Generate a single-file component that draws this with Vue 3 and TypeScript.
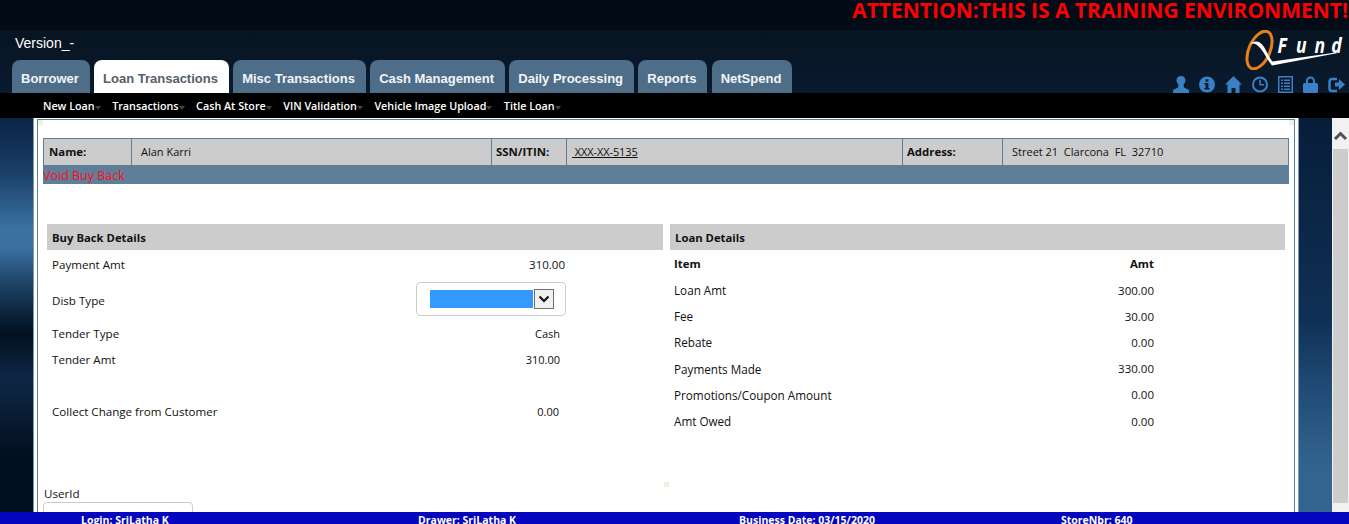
<script setup lang="ts">
const tabs = ['Borrower', 'Loan Transactions', 'Misc Transactions', 'Cash Management', 'Daily Processing', 'Reports', 'NetSpend']
const menu = ['New Loan', 'Transactions', 'Cash At Store', 'VIN Validation', 'Vehicle Image Upload', 'Title Loan']
const buyBack = [
  { label: 'Payment Amt', value: '310.00', cls: 'r1' },
  { label: 'Disb Type', value: '', cls: 'r2' },
  { label: 'Tender Type', value: 'Cash', cls: 'r3' },
  { label: 'Tender Amt', value: '310.00', cls: 'r4' },
  { label: 'Collect Change from Customer', value: '0.00', cls: 'r5' },
]
const loan = [
  ['Loan Amt', '300.00'],
  ['Fee', '30.00'],
  ['Rebate', '0.00'],
  ['Payments Made', '330.00'],
  ['Promotions/Coupon Amount', '0.00'],
  ['Amt Owed', '0.00'],
]
</script>

<template>
  <div class="app">
    <header class="header">
      <div class="attention">ATTENTION:THIS IS A TRAINING ENVIRONMENT!</div>
      <div class="version">Version_-</div>
      <div class="tab-row">
        <div class="tabs">
          <div v-for="t in tabs" :key="t" class="tab" :class="{ active: t === 'Loan Transactions' }">{{ t }}</div>
        </div>
        <div class="brand">
          <svg class="logo" width="100" height="40" viewBox="0 0 100 40">
            <ellipse cx="15.500" cy="20" rx="10.500" ry="20" transform="rotate(24 15.500 20)" fill="none" stroke="#e8801a" stroke-width="3" />
            <path d="M6 14 C11 10 16 11 20 17 C23 22 26 29 28.500 31.500 L92 22.500 L94 23 L28 35.500 C24 31 21 24 17 19 C13.500 14.500 10 12.500 6 14 Z" fill="#fff" />
            <text y="23" class="logo-text" transform="scale(.8 1)" x="42 65 88 109">Fund</text>
          </svg>
          <div class="icons">
            <svg width="16" height="17" viewBox="0 0 16 17"><circle cx="8" cy="4.500" r="4.500" /><path d="M5.500 8h5l.5 3.500 5 2.500v3H0v-3l5-2.500z" /></svg>
            <svg width="16" height="17" viewBox="0 0 16 17"><circle cx="8" cy="8.500" r="8" /><rect x="6.600" y="3.300" width="2.800" height="2.400" fill="#0a1a2e" /><path d="M5.400 7h4v5h1.200v1.500H5.400V12h1.200V8.400H5.400z" fill="#0a1a2e" /></svg>
            <svg width="17" height="17" viewBox="0 0 17 17"><path d="M8.500 0 17 8.500h-2.500V17H10.500v-5h-4v5H2.500V8.500H0z" /></svg>
            <svg width="16" height="17" viewBox="0 0 16 17"><circle cx="8" cy="8.500" r="7" fill="none" stroke="#3a80c4" stroke-width="2" /><path d="M7.200 4h1.600v4h3.200v1.600H7.200z" /></svg>
            <svg width="15" height="17" viewBox="0 0 15 17"><path fill-rule="evenodd" d="M0 0h15v17H0zM1.500 1.500v14h12v-14z" /><path d="M3 3.500h2v1.500H3zM6 3.500h6v1.500H6zM3 6.500h2v1.500H3zM6 6.500h6v1.500H6zM3 9.500h2v1.500H3zM6 9.500h6v1.500H6zM3 12.500h2v1.500H3zM6 12.500h6v1.500H6z" /></svg>
            <svg width="15" height="17" viewBox="0 0 15 17"><path d="M3 7V5a4.500 4.500 0 0 1 9 0v2h-2V5a2.500 2.500 0 0 0-5 0v2z" /><rect y="7" width="15" height="10" rx="1.500" /></svg>
            <svg width="17" height="17" viewBox="0 0 17 17"><path d="M9 3H4a2.500 2.500 0 0 0-2.500 2.500v7A2.500 2.500 0 0 0 4 15h5" fill="none" stroke="#3a80c4" stroke-width="2.500" /><path d="M7 6.500h4V3l6 5.500-6 5.500v-3.500H7z" /></svg>
          </div>
        </div>
      </div>
    </header>

    <nav class="menu">
      <div v-for="m in menu" :key="m" class="menu-item">{{ m }}<i class="caret"></i></div>
    </nav>

    <div class="body-row">
      <div class="side left"></div>
      <main class="page">
        <div class="frame">
          <i class="speck s-left"></i>
          <i class="speck s-right"></i>
          <i class="speck s-mid"></i>
          <div class="info">
            <div class="info-row">
              <div class="cell c-name"><b>Name:</b></div>
              <div class="cell c-name-v">Alan Karri</div>
              <div class="cell c-ssn"><b>SSN/ITIN:</b></div>
              <div class="cell c-ssn-v"><u>&nbsp;XXX-XX-5135</u></div>
              <div class="cell c-addr"><b>Address:</b></div>
              <div class="cell c-addr-v">Street 21 &nbsp;Clarcona &nbsp;FL &nbsp;32710</div>
            </div>
            <div class="title-bar">Void Buy Back</div>
          </div>

          <div class="panels">
            <section class="panel p-left">
              <h3 class="panel-head">Buy Back Details</h3>
              <div v-for="row in buyBack" :key="row.label" class="bb-row" :class="row.cls">
                <span>{{ row.label }}</span>
                <div v-if="row.label === 'Disb Type'" class="select-box">
                  <div class="select-fill"></div>
                  <div class="select-btn">
                    <svg width="12" height="8" viewBox="0 0 12 8"><path d="M1.500 1.500 6 6l4.500-4.500" fill="none" stroke="#111" stroke-width="2.200" /></svg>
                  </div>
                </div>
                <span v-else class="val">{{ row.value }}</span>
              </div>
            </section>
            <section class="panel p-right">
              <h3 class="panel-head">Loan Details</h3>
              <div class="ld-row first"><b>Item</b><b>Amt</b></div>
              <div v-for="row in loan" :key="row[0]" class="ld-row">
                <span>{{ row[0] }}</span><span>{{ row[1] }}</span>
              </div>
            </section>
          </div>

          <div class="user">
            <div>UserId</div>
            <div class="user-input"></div>
          </div>
        </div>
      </main>
      <div class="side right"></div>
      <div class="scrollbar">
        <svg width="17" height="17" viewBox="0 0 17 17"><path d="M3 13 8.500 7.500 14 13" fill="none" stroke="#505050" stroke-width="3" /></svg>
        <div class="thumb"></div>
      </div>
    </div>

    <footer class="footer">
      <span class="f1">Login: SriLatha K</span>
      <span class="f2">Drawer: SriLatha K</span>
      <span class="f3">Business Date: 03/15/2020</span>
      <span class="f4">StoreNbr: 640</span>
    </footer>
  </div>
</template>

<style>
html, body {
  margin: 0;
  overflow: hidden;
}
</style>

<style scoped>
.app {
  position: relative;
  width: 1349px;
  height: 524px;
  overflow: hidden;
  display: flex;
  flex-direction: column;
  font-family: 'Open Sans', sans-serif;
  color: #111;
  background: #07182a;
}

.header {
  height: 93px;
  flex-shrink: 0;
  background: linear-gradient(#020b16 0, #020b16 30px, #071421 30px, #0a1b2f 100%);
  position: relative;
}
.attention {
  height: 20px;
  line-height: 20px;
  text-align: right;
  padding-right: 1px;
  font-weight: 700;
  font-size: 21px;
  color: #f00;
  white-space: nowrap;
}
.version {
  margin-top: 15px;
  padding-left: 15px;
  height: 16px;
  line-height: 16px;
  font-family: 'Liberation Sans', sans-serif;
  font-size: 14px;
  color: #fff;
}
.tab-row {
  position: absolute;
  left: 0;
  right: 0;
  bottom: 0;
  display: flex;
  justify-content: space-between;
  align-items: flex-end;
}
.tabs {
  display: flex;
  gap: 4.500px;
  padding-left: 12px;
}
.tab {
  height: 33px;
  line-height: 37px;
  padding: 0 10.750px 0 9px;
  background: #4e6d88;
  border-radius: 8px 8px 0 0;
  color: #f2f5f8;
  font-family: 'Liberation Sans', sans-serif;
  font-weight: 700;
  font-size: 13px;
  white-space: nowrap;
}
.tab.active {
  background: #fff;
  color: #55606a;
}
.brand {
  display: flex;
  flex-direction: column;
  align-items: flex-end;
}
.logo {
  margin-right: 5px;
  margin-bottom: 6px;
}
.logo-text {
  font-size: 22px;
  font-weight: 700;
  font-style: italic;
  fill: #fff;
}
.icons {
  display: flex;
  gap: 10px;
  padding-right: 4px;
  fill: #3a80c4;
}

.menu {
  height: 25px;
  flex-shrink: 0;
  background: #000;
  display: flex;
  gap: 17.500px;
  padding-left: 43px;
  align-items: center;
}
.menu-item {
  color: #fff;
  font-size: 10.750px;
  font-weight: 600;
  white-space: nowrap;
  position: relative;
}
.caret {
  position: absolute;
  right: -6px;
  top: 7px;
  border: 3px solid transparent;
  border-top: 4px solid #444;
}

.body-row {
  flex: 1;
  min-height: 0;
  display: flex;
}
.side {
  width: 33px;
  flex-shrink: 0;
}
.side.left {
  background: linear-gradient(#0a2545 0, #1a3f66 55px, #3a72a2 110px, #3a70a0 130px, #1d4468 165px, #021020 215px, #0f2745 260px, #020f1e 340px, #020f1e 100%);
}
.side.right {
  background: linear-gradient(#071d3a 0, #0f3055 200px, #1f4a75 267px, #336490 350px, #336490 100%);
}
.page {
  width: 1266px;
  flex-shrink: 0;
  background: #fff;
  padding: 1px 3px 0 3px;
  box-sizing: border-box;
  border-left: 1px solid #7d9ab2;
  border-right: 1px solid #7d9ab2;
}
.frame {
  position: relative;
  height: 100%;
  box-sizing: border-box;
  border: 1px solid #5f7f99;
  border-bottom: 0;
  padding: 18px 5px 0 5px;
  overflow: hidden;
}
.speck {
  position: absolute;
  width: 5px;
  height: 5px;
  background: #eef3e0;
}
.s-left { left: 0; top: 0; }
.s-right { right: 0; top: 0; }
.s-mid { left: 626px; top: 362px; }
.info {
  height: 46px;
}
.info-row {
  display: flex;
  height: 27px;
  box-sizing: border-box;
  background: #ccc;
  border: 1px solid #5f7f99;
  border-bottom: 0;
}
.cell {
  font-size: 11px;
  line-height: 26px;
  white-space: nowrap;
  box-sizing: border-box;
  padding-left: 5px;
  border-right: 1px solid #5f7f99;
}
.cell b {
  font-size: 11.400px;
}
.c-name { width: 88px; }
.c-name-v { width: 360px; padding-left: 9px; }
.c-ssn { width: 75px; padding-left: 4px; }
.c-ssn-v { width: 336px; padding-left: 5px; letter-spacing: -0.1px; }
.c-addr { width: 100px; padding-left: 4px; }
.c-addr-v { flex: 1; border-right: 0; padding-left: 9px; }
.title-bar {
  height: 19px;
  line-height: 22px;
  background: #5f7f99;
  color: #ff0a1e;
  font-size: 12.500px;
  overflow: hidden;
}
.panels {
  display: flex;
  gap: 7px;
  margin-top: 40px;
  padding: 0 4px;
  height: 252px;
}
.panel {
  flex-shrink: 0;
}
.p-left {
  width: 616px;
}
.p-right {
  width: 615px;
}
.panel-head {
  margin: 0;
  height: 26px;
  line-height: 27px;
  background: #ccc;
  padding-left: 5px;
  font-size: 11.300px;
  font-weight: 700;
}
.bb-row {
  display: flex;
  justify-content: space-between;
  align-items: center;
  padding-left: 5px;
  font-size: 11.600px;
  box-sizing: border-box;
}
.val {
  font-size: 11px;
}
.r1 { height: 30px; padding-right: 98px; padding-bottom: 2px; }
.r1 .val { font-size: 11.500px; }
.r2 { height: 38px; padding-right: 97px; }
.r2 > span { padding-top: 2px; }
.r3 { height: 30px; padding-right: 103px; }
.r4 { height: 22px; padding-right: 103px; }
.r5 { height: 82px; padding-right: 104px; }
.select-box {
  width: 150px;
  height: 34px;
  box-sizing: border-box;
  border: 1px solid #ccc;
  border-radius: 4px;
  display: flex;
  align-items: center;
  padding-left: 13px;
}
.select-fill {
  width: 103px;
  height: 18px;
  background: #3399ff;
}
.select-btn {
  width: 20px;
  height: 20px;
  margin-left: 1px;
  box-sizing: border-box;
  border: 1px solid #707070;
  background: #f0f0f0;
  display: flex;
  align-items: center;
  justify-content: center;
}
.ld-row {
  display: flex;
  justify-content: space-between;
  align-items: center;
  height: 26.200px;
  padding: 0 131px 0 4px;
  font-size: 11.700px;
}
.ld-row span:last-child {
  font-size: 11.500px;
}
.ld-row b {
  font-size: 11.400px;
}
.ld-row.first {
  height: 27px;
}
.user {
  margin-top: 10px;
  padding-left: 1px;
  font-size: 11.600px;
}
.user-input {
  margin-left: -1px;
  margin-top: 1px;
  width: 150px;
  height: 34px;
  box-sizing: border-box;
  border: 1px solid #ccc;
  border-radius: 4px;
}
.scrollbar {
  width: 17px;
  flex-shrink: 0;
  background: #f1f1f1;
  box-sizing: border-box;
  padding: 8px 1px 0 0;
  display: flex;
  flex-direction: column;
  align-items: center;
}
.scrollbar svg {
  flex-shrink: 0;
}
.thumb {
  width: 15px;
  height: 354px;
  margin-top: 6px;
  background: #cdcdcd;
  flex-shrink: 0;
}
.footer {
  position: absolute;
  left: 0;
  right: 0;
  bottom: 0;
  height: 12px;
  background: #0505c0;
  color: #fff;
  font-size: 10.500px;
  font-weight: 700;
  line-height: 16px;
  overflow: hidden;
}
.footer span {
  position: absolute;
  top: 0;
  white-space: nowrap;
}
.f1 { left: 81px; }
.f2 { left: 418px; }
.f3 { left: 739px; }
.f4 { left: 1061px; }
</style>
